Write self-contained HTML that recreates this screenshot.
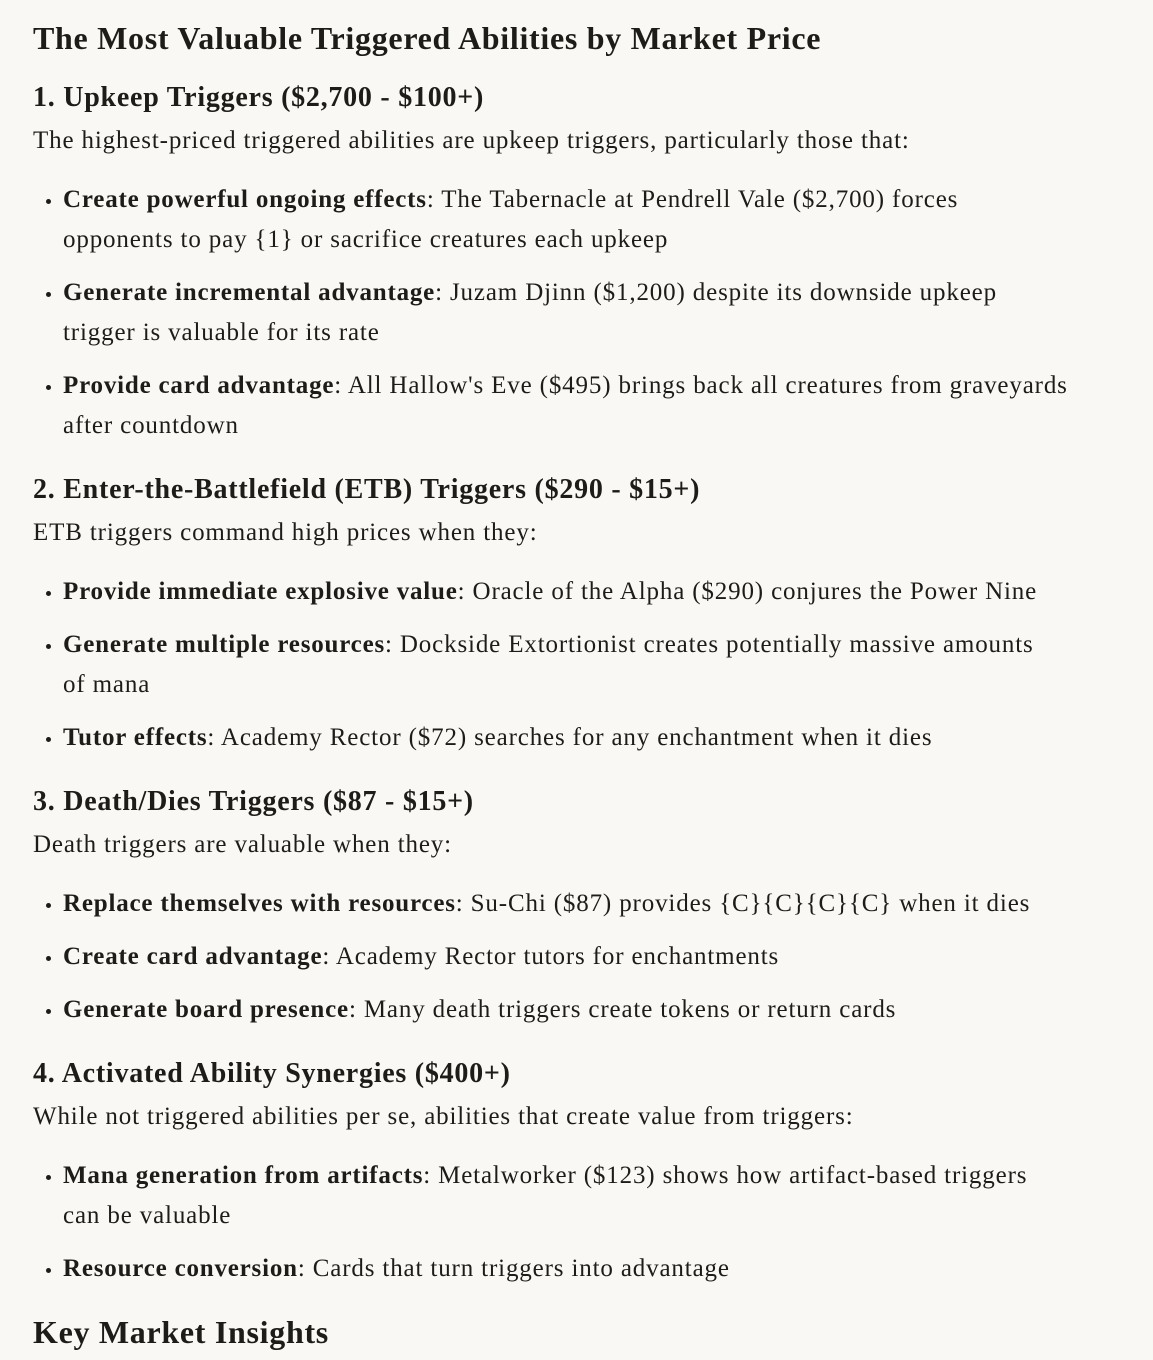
<!DOCTYPE html>
<html><head><meta charset="utf-8"><style>
html,body{margin:0;padding:0;background:#f9f8f4;}
body{width:1153px;height:1360px;overflow:hidden;font-family:"Liberation Serif",serif;color:#1d1c19;}
.c{padding-left:33px;padding-top:16px;}
h2{font-size:32px;line-height:44px;margin:0;font-weight:bold;letter-spacing:0.7px;}
h3{font-size:28px;line-height:40px;margin:18px 0 0;font-weight:bold;letter-spacing:0.75px;}
h3.n{margin-top:24px;}
h2.n{margin-top:21px;}
p{font-size:25px;line-height:40px;margin:3px 0 0;letter-spacing:0.85px;}
ul{margin:19px 0 0;padding:0 0 0 30px;list-style:none;}
li{font-size:25px;line-height:40px;margin:0 0 13px;position:relative;letter-spacing:0.85px;}
li:before{content:"";position:absolute;left:-17px;top:19px;width:5px;height:5px;border-radius:50%;background:#1d1c19;}
b{font-weight:bold;letter-spacing:0.8px;}
</style></head><body><div class="c">
<h2>The Most Valuable Triggered Abilities by Market Price</h2>
<h3>1. Upkeep Triggers ($2,700 - $100+)</h3>
<p>The highest-priced triggered abilities are upkeep triggers, particularly those that:</p>
<ul>
<li><b>Create powerful ongoing effects</b>: The Tabernacle at Pendrell Vale ($2,700) forces<br>opponents to pay {1} or sacrifice creatures each upkeep</li>
<li><b>Generate incremental advantage</b>: Juzam Djinn ($1,200) despite its downside upkeep<br>trigger is valuable for its rate</li>
<li><b>Provide card advantage</b>: All Hallow's Eve ($495) brings back all creatures from graveyards<br>after countdown</li>
</ul>
<h3 class="n">2. Enter-the-Battlefield (ETB) Triggers ($290 - $15+)</h3>
<p>ETB triggers command high prices when they:</p>
<ul>
<li><b>Provide immediate explosive value</b>: Oracle of the Alpha ($290) conjures the Power Nine</li>
<li><b>Generate multiple resources</b>: Dockside Extortionist creates potentially massive amounts<br>of mana</li>
<li><b>Tutor effects</b>: Academy Rector ($72) searches for any enchantment when it dies</li>
</ul>
<h3 class="n">3. Death/Dies Triggers ($87 - $15+)</h3>
<p>Death triggers are valuable when they:</p>
<ul>
<li><b>Replace themselves with resources</b>: Su-Chi ($87) provides {C}{C}{C}{C} when it dies</li>
<li><b>Create card advantage</b>: Academy Rector tutors for enchantments</li>
<li><b>Generate board presence</b>: Many death triggers create tokens or return cards</li>
</ul>
<h3 class="n">4. Activated Ability Synergies ($400+)</h3>
<p>While not triggered abilities per se, abilities that create value from triggers:</p>
<ul>
<li><b>Mana generation from artifacts</b>: Metalworker ($123) shows how artifact-based triggers<br>can be valuable</li>
<li><b>Resource conversion</b>: Cards that turn triggers into advantage</li>
</ul>
<h2 class="n">Key Market Insights</h2>
</div></body></html>
